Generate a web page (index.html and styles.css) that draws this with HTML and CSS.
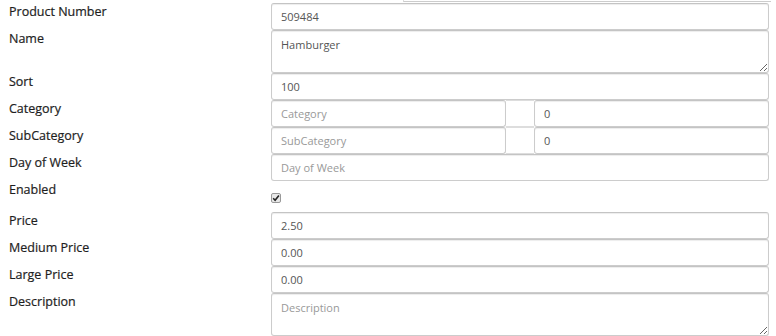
FILE: index.html
```html
<!DOCTYPE html>
<html lang="en">
<head>
    <meta charset="UTF-8">
    <meta name="viewport" content="width=device-width, initial-scale=1.0">
    <title>Edit Product</title>
    <link rel="stylesheet" href="styles.css">
</head>
<body>
    <!-- Borda do menu aberto acima do formulário -->
    <div class="menu-edge"></div>

    <form class="product-form">
        <label class="form-label">Product Number</label>
        <div class="form-field">
            <input type="text" class="form-input" value="509484">
        </div>

        <label class="form-label">Name</label>
        <div class="form-field">
            <textarea class="form-input form-textarea">Hamburger</textarea>
        </div>

        <label class="form-label">Sort</label>
        <div class="form-field">
            <input type="text" class="form-input" value="100">
        </div>

        <label class="form-label">Category</label>
        <div class="form-field input-group">
            <input type="text" class="form-input" placeholder="Category">
            <span class="group-addon"></span>
            <input type="text" class="form-input" value="0">
        </div>

        <label class="form-label">SubCategory</label>
        <div class="form-field input-group">
            <input type="text" class="form-input" placeholder="SubCategory">
            <span class="group-addon"></span>
            <input type="text" class="form-input" value="0">
        </div>

        <label class="form-label">Day of Week</label>
        <div class="form-field">
            <input type="text" class="form-input" placeholder="Day of Week">
        </div>

        <label class="form-label">Enabled</label>
        <div class="form-field check-field">
            <span class="check-box">
                <svg width="8" height="8" viewBox="0 0 8 8"><path d="M1.2 4.3 L3.1 6.2 L6.9 1.6" fill="none" stroke="#222" stroke-width="1.6"/></svg>
            </span>
        </div>

        <label class="form-label">Price</label>
        <div class="form-field">
            <input type="text" class="form-input" value="2.50">
        </div>

        <label class="form-label">Medium Price</label>
        <div class="form-field">
            <input type="text" class="form-input" value="0.00">
        </div>

        <label class="form-label">Large Price</label>
        <div class="form-field">
            <input type="text" class="form-input" value="0.00">
        </div>

        <label class="form-label">Description</label>
        <div class="form-field">
            <textarea class="form-input form-textarea" placeholder="Description"></textarea>
        </div>
    </form>
</body>
</html>
```

FILE: styles.css
```css
body {
    margin: 0;
    font-family: 'Open Sans', Arial, sans-serif;
    background-color: #fff;
    position: relative;
    overflow: hidden;
}

/* Pedaço do menu que aparece no topo */
.menu-edge {
    position: absolute;
    top: -10px;
    left: 403px;
    width: 367px;
    height: 11px;
    border-left: 1px solid #ddd;
    border-bottom: 1px solid #ccc;
}

.product-form {
    display: grid;
    grid-template-columns: 262px 1fr;
    padding: 3px 7px 0 9px;
}

.form-label {
    font-size: 12.5px;
    font-weight: 400;
    color: #1e1e1e;
    line-height: 17px;
    padding-top: 0;
    -webkit-text-stroke: 0.2px #1e1e1e;
}

.form-field {
    display: flex;
}

.form-input {
    box-sizing: border-box;
    width: 100%;
    height: 27px;
    margin: 0;
    padding: 0 9px;
    border: 1px solid #ccc;
    border-top-color: #c4c4c4;
    border-radius: 3px;
    box-shadow: inset 0 1px 1px rgba(0, 0, 0, 0.075);
    font-family: 'Open Sans', Arial, sans-serif;
    font-size: 11px;
    color: #555;
    background-color: #fff;
    outline: none;
}

.form-input::placeholder {
    color: #999;
}

.form-textarea {
    height: 43px;
    padding: 6px 9px;
    line-height: 15px;
    resize: vertical;
}

.input-group .form-input {
    flex: 1;
    min-width: 0;
}

.group-addon {
    width: 28px;
    flex: none;
    box-sizing: border-box;
    border-top: 1px solid #ddd;
    border-bottom: 1px solid #ddd;
}

.check-field {
    height: 31px;
    align-items: center;
    padding-top: 2px;
    box-sizing: border-box;
}

.check-box {
    width: 8px;
    height: 8px;
    border: 1px solid #999;
    border-radius: 2px;
    background-color: #e8e8e8;
    display: flex;
    align-items: center;
    justify-content: center;
}
```
